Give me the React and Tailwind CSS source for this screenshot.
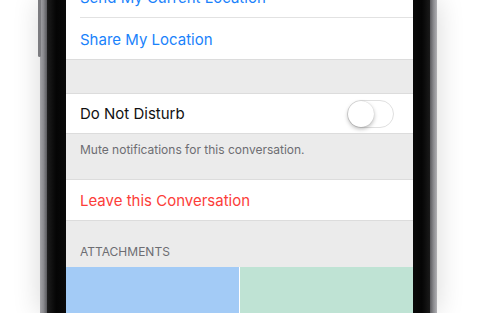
export default function App() {
  return (
    <div className="w-[480px] h-[313px] bg-white overflow-hidden font-['Inter','Roboto',sans-serif]">
      <div className="relative ml-[40px] w-[397px] h-[313px] flex shadow-[0_0_26px_rgba(0,0,0,0.16)]">
        {/* side button */}
        <div className="absolute -left-[2px] top-0 w-[3px] h-[57px] bg-[#7c7c80] rounded-b-sm" />
        {/* left edge */}
        <div className="w-[7px] bg-gradient-to-r from-[#a4a4a8] via-[#8a8a8e] to-[#5a5a5e]" />
        <div className="w-[19px] bg-gradient-to-r from-[#1e1e1e] via-[#050505] to-[#0a0a0a]" />

        {/* screen */}
        <div className="w-[347px] h-full overflow-hidden bg-[#ebebeb] flex flex-col">
          <div className="-mt-[22px] bg-white border-b border-[#dcdcdc] pl-[14px]">
            <div className="h-[40px] flex items-center pt-[2px] border-b border-[#e2e2e2]">
              <span className="text-[15px] text-[#1a82fb]">Send My Current Location</span>
            </div>
            <div className="h-[41px] flex items-center pt-[3px]">
              <span className="text-[15px] text-[#1a82fb]">Share My Location</span>
            </div>
          </div>

          <div className="h-[33px]" />

          {/* Do not disturb */}
          <div className="h-[41px] bg-white border-y border-[#dcdcdc] flex items-center justify-between pl-[14px] pr-[19px]">
            <span className="text-[15px] text-[#111] pt-[2px]">Do Not Disturb</span>
            <div className="relative w-[47px] h-[28px] rounded-full border border-[#e0e0e0] bg-white">
              <div className="absolute left-0 top-[0.5px] w-[26px] h-[26px] rounded-full bg-white shadow-[0_2px_4px_rgba(0,0,0,0.28),0_0_1px_rgba(0,0,0,0.2)]" />
            </div>
          </div>

          <div className="h-[45px] pl-[14px] pt-[8px] text-[12px] leading-[16px] text-[#6d6d72]">
            Mute notifications for this conversation.
          </div>

          {/* Leave */}
          <div className="h-[42px] bg-white border-y border-[#dcdcdc] flex items-center pl-[14px] pt-[2px]">
            <span className="text-[15px] text-[#fc3d39]">Leave this Conversation</span>
          </div>

          <div className="h-[46px] pl-[14px] pt-[23px] text-[12px] leading-[16px] text-[#6d6d72]">
            ATTACHMENTS
          </div>

          <div className="flex-1 grid grid-cols-2 gap-[1px] bg-white">
            <div className="bg-[#a3cbf6]" />
            <div className="bg-[#bfe3d4]" />
          </div>
        </div>

        {/* right edge */}
        <div className="w-[17px] bg-gradient-to-r from-[#0a0a0a] via-[#050505] to-[#1a1a1a]" />
        <div className="w-[7px] bg-gradient-to-r from-[#5a5a5e] via-[#8a8a8e] to-[#b0b0b4]" />
      </div>
    </div>
  );
}
